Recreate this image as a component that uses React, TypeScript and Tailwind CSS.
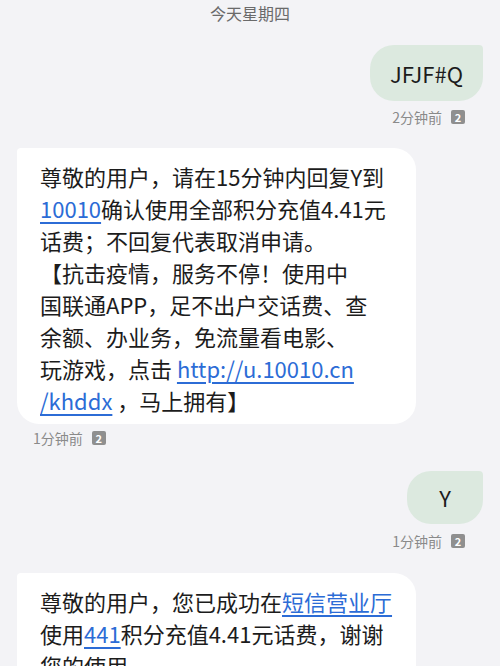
const FONT = { fontFamily: '"Noto Sans CJK SC", "Noto Sans", sans-serif' };

function Link({ children }: { children: React.ReactNode }) {
  return (
    <span className="text-[#2c6cd6] underline decoration-[1.5px] underline-offset-[4px]">{children}</span>
  );
}

function Stamp({ label, align }: { label: string; align: 'left' | 'right' }) {
  return (
    <div
      className={
        align === 'right'
          ? 'flex h-[18px] items-center justify-end gap-[9px] pr-[18px]'
          : 'flex h-[18px] items-center gap-[9px] pl-[16px]'
      }
    >
      <span className="text-[14px] leading-none text-[#8a8a8a]">{label}</span>
      <span className="flex h-[14px] w-[14px] items-center justify-center rounded-[2px] bg-[#8f8f8f] text-[11px] font-bold leading-none text-white">
        2
      </span>
    </div>
  );
}

function Outgoing({ text, wide }: { text: string; wide?: boolean }) {
  return (
    <div className="flex justify-end">
      <div
        className={
          wide
            ? 'flex h-[56px] items-center justify-center rounded-[24px] rounded-tr-[4px] bg-[#dce9df] px-[20px] text-[22px] text-[#1c1c1c]'
            : 'flex h-[53px] w-[76px] items-center justify-center rounded-[24px] rounded-tr-[4px] bg-[#dce9df] text-[22px] text-[#1c1c1c]'
        }
      >
        {text}
      </div>
    </div>
  );
}

function Incoming({ lines }: { lines: React.ReactNode[] }) {
  return (
    <div className="w-[399px] rounded-[22px] rounded-tl-[4px] bg-white pb-[8px] pl-[23px] pr-[12px] pt-[12px]">
      {lines.map((l, i) => (
        <div key={i} className="whitespace-nowrap text-[22px] leading-[32px] text-[#1c1c1c]">
          {l}
        </div>
      ))}
    </div>
  );
}

export default function App() {
  return (
    <div className="h-[666px] w-[500px] overflow-hidden bg-[#f3f3f6] px-[17px]" style={FONT}>
      <div className="flex h-[26px] items-center justify-center text-[16px] text-[#6a6a6a]">今天星期四</div>

      <div className="mt-[19px]">
        <Outgoing text="JFJF#Q" wide />
      </div>
      <div className="mt-[7px]">
        <Stamp label="2分钟前" align="right" />
      </div>

      <div className="mt-[22px]">
        <Incoming
          lines={[
            '尊敬的用户，请在15分钟内回复Y到',
            <>
              <Link>10010</Link>确认使用全部积分充值4.41元
            </>,
            '话费；不回复代表取消申请。',
            '【抗击疫情，服务不停！使用中',
            '国联通APP，足不出户交话费、查',
            '余额、办业务，免流量看电影、',
            <>
              玩游戏，点击 <Link>http://u.10010.cn</Link>
            </>,
            <>
              <Link>/khddx</Link> ，马上拥有】
            </>,
          ]}
        />
      </div>
      <div className="mt-[5px]">
        <Stamp label="1分钟前" align="left" />
      </div>

      <div className="mt-[24px]">
        <Outgoing text="Y" />
      </div>
      <div className="mt-[8px]">
        <Stamp label="1分钟前" align="right" />
      </div>

      <div className="mt-[23px]">
        <Incoming
          lines={[
            <>
              尊敬的用户，您已成功在<Link>短信营业厅</Link>
            </>,
            <>
              使用<Link>441</Link>积分充值4.41元话费，谢谢
            </>,
            '您的使用。',
          ]}
        />
      </div>
    </div>
  );
}
